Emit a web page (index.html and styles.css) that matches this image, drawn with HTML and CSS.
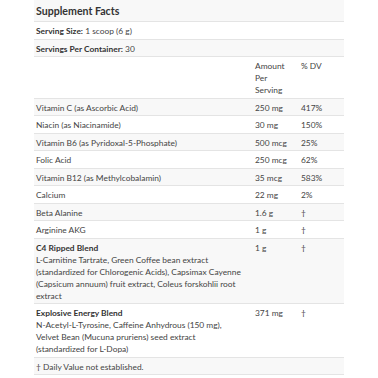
FILE: index.html
```html
<!DOCTYPE html>
<html lang="en">
<head>
  <meta charset="UTF-8">
  <title>Supplement Facts</title>
  <link rel="stylesheet" href="styles.css">
</head>
<body>

  <table class="facts">
    <tr class="shade">
      <th colspan="3" class="title">Supplement Facts</th>
    </tr>
    <tr>
      <td colspan="3"><b>Serving Size:</b> 1 scoop (6 g)</td>
    </tr>
    <tr class="shade">
      <td colspan="3"><b>Servings Per Container:</b> 30</td>
    </tr>
    <tr>
      <td class="name"></td>
      <td class="amt">Amount Per Serving</td>
      <td class="dv">% DV</td>
    </tr>
    <tr class="shade">
      <td>Vitamin C (as Ascorbic Acid)</td><td>250 mg</td><td>417%</td>
    </tr>
    <tr>
      <td>Niacin (as Niacinamide)</td><td>30 mg</td><td>150%</td>
    </tr>
    <tr class="shade">
      <td>Vitamin B6 (as Pyridoxal-5-Phosphate)</td><td>500 mcg</td><td>25%</td>
    </tr>
    <tr>
      <td>Folic Acid</td><td>250 mcg</td><td>62%</td>
    </tr>
    <tr class="shade">
      <td>Vitamin B12 (as Methylcobalamin)</td><td>35 mcg</td><td>583%</td>
    </tr>
    <tr>
      <td>Calcium</td><td>22 mg</td><td>2%</td>
    </tr>
    <tr class="shade">
      <td>Beta Alanine</td><td>1.6 g</td><td>†</td>
    </tr>
    <tr>
      <td>Arginine AKG</td><td>1 g</td><td>†</td>
    </tr>
    <tr class="shade">
      <td>
        <b>C4 Ripped Blend</b><br>
        L-Carnitine Tartrate, Green Coffee bean extract (standardized for Chlorogenic Acids), Capsimax Cayenne (Capsicum annuum) fruit extract, Coleus forskohlii root extract
      </td>
      <td>1 g</td><td>†</td>
    </tr>
    <tr>
      <td>
        <b>Explosive Energy Blend</b><br>
        N-Acetyl-L-Tyrosine, Caffeine Anhydrous (150 mg), Velvet Bean (Mucuna pruriens) seed extract (standardized for L-Dopa)
      </td>
      <td>371 mg</td><td>†</td>
    </tr>
    <tr class="shade">
      <td colspan="3">† Daily Value not established.</td>
    </tr>
  </table>

</body>
</html>
```

FILE: styles.css
```css
* {
  margin: 0;
  padding: 0;
  box-sizing: border-box;
  font-family: "Lato", "Liberation Sans", sans-serif;
}

body {
  background: #fff;
  padding: 0 34px;
}

.facts {
  width: 310px;
  border-collapse: collapse;
  font-size: 8.4px;
  line-height: 12px;
  color: #444;
}

.facts td,
.facts th {
  text-align: left;
  vertical-align: top;
  padding: 3px 2px 1.5px 2px;
  border-bottom: 1px solid #e4e4e4;
  font-weight: normal;
}

.facts b {
  font-weight: 700;
  color: #333;
}

.facts tr.shade {
  background-color: #f8f8f8;
}

.facts th.title {
  font-size: 10.6px;
  font-weight: 700;
  color: #333;
  padding: 5px 2px 4px 2px;
  line-height: 12px;
}

.facts td:first-child {
  width: 219px;
  padding-right: 8px;
}

.facts td.amt {
  width: 46px;
  padding-right: 8px;
}
```
